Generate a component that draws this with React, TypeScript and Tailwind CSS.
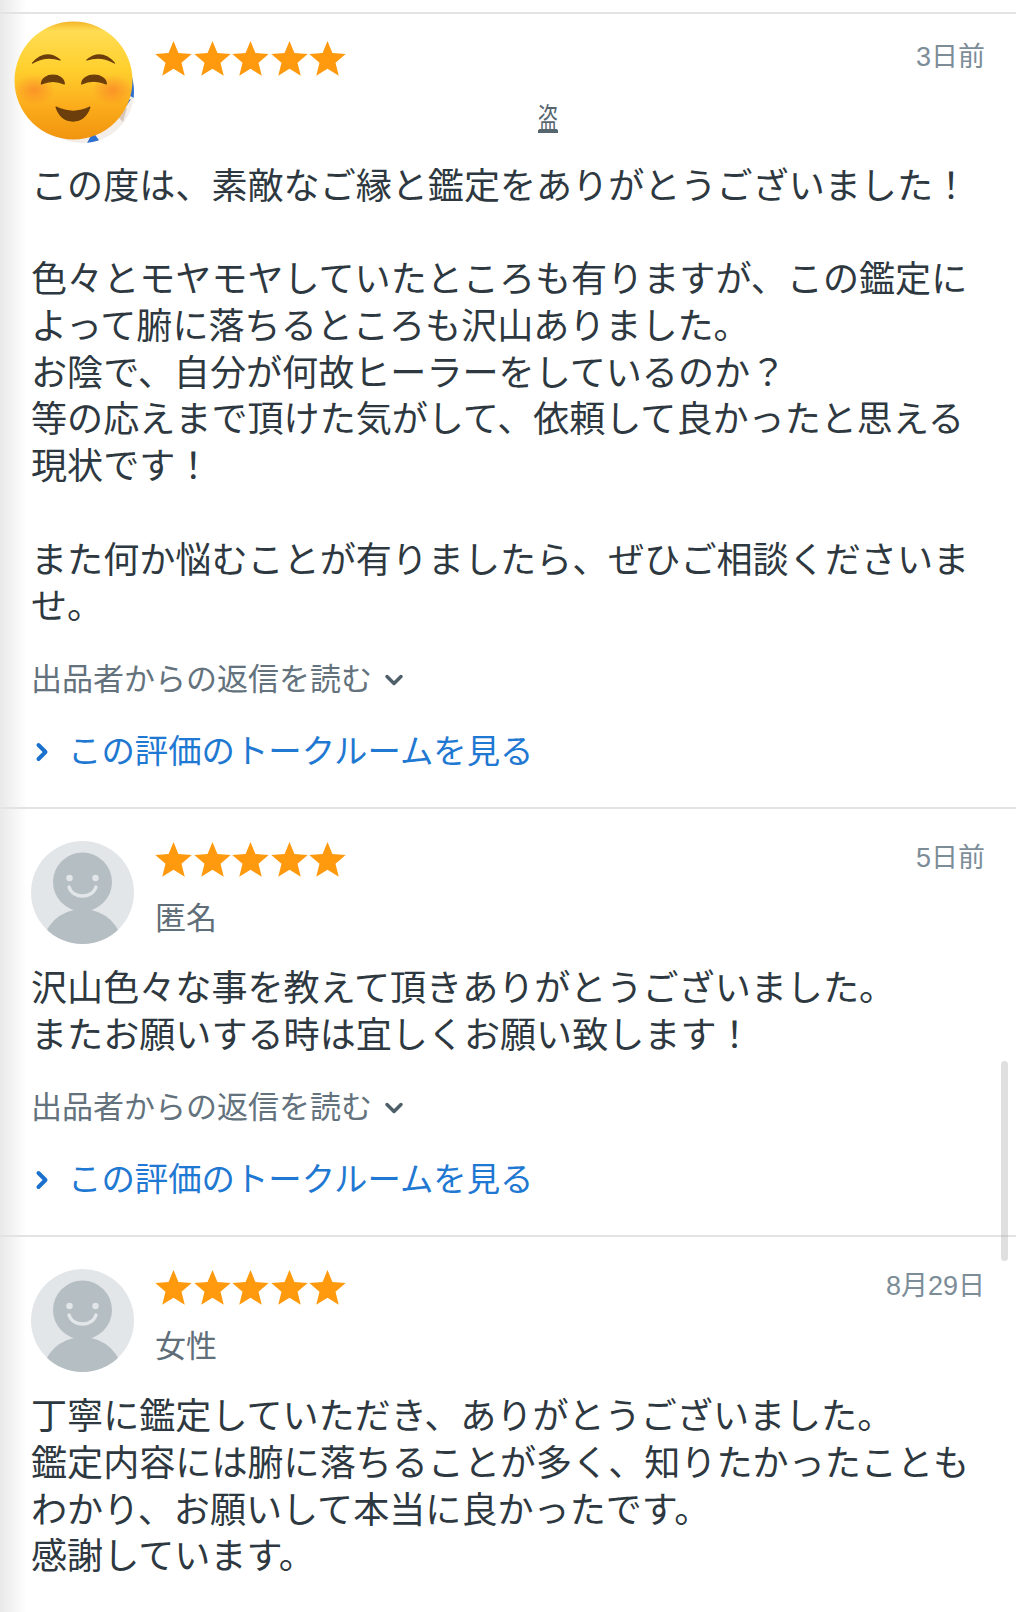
import React from 'react';
import { ChevronDown, ChevronRight } from 'lucide-react';

interface Review {
  date: string;
  name: string;
  lines: string[];
}

const reviews: Review[] = [
  {
    date: '3日前',
    name: '盗',
    lines: [
      'この度は、素敵なご縁と鑑定をありがとうございました！',
      '',
      '色々とモヤモヤしていたところも有りますが、この鑑定に',
      'よって腑に落ちるところも沢山ありました。',
      'お陰で、自分が何故ヒーラーをしているのか？',
      '等の応えまで頂けた気がして、依頼して良かったと思える',
      '現状です！',
      '',
      'また何か悩むことが有りましたら、ぜひご相談くださいま',
      'せ。',
    ],
  },
  {
    date: '5日前',
    name: '匿名',
    lines: ['沢山色々な事を教えて頂きありがとうございました。', 'またお願いする時は宜しくお願い致します！'],
  },
  {
    date: '8月29日',
    name: '女性',
    lines: [
      '丁寧に鑑定していただき、ありがとうございました。',
      '鑑定内容には腑に落ちることが多く、知りたかったことも',
      'わかり、お願いして本当に良かったです。',
      '感謝しています。',
    ],
  },
];

const Stars = () => (
  <div className="flex gap-[1.5px]">
    {[0, 1, 2, 3, 4].map(i => (
      <svg key={i} viewBox="0 0 24 24" className="w-[37px] h-[37px]">
        <polygon points="12,0.6 15.2,8.4 23.8,9.1 17.2,14.7 19.3,23.2 12,18.6 4.7,23.2 6.8,14.7 0.2,9.1 8.8,8.4" fill="#ff9a0e" />
      </svg>
    ))}
  </div>
);

const DefaultAvatar = () => (
  <svg viewBox="0 0 103 103" className="w-[103px] h-[103px] shrink-0">
    <defs>
      <clipPath id="avatarClip">
        <circle cx="51.5" cy="51.5" r="51.5" />
      </clipPath>
    </defs>
    <g clipPath="url(#avatarClip)">
      <rect width="103" height="103" fill="#e3e6e8" />
      <circle cx="51.5" cy="41" r="29.5" fill="#b5bec3" />
      <ellipse cx="51.5" cy="106" rx="40" ry="38" fill="#b5bec3" />
      <circle cx="38.5" cy="37" r="3.2" fill="#e3e6e8" />
      <circle cx="64.5" cy="37" r="3.2" fill="#e3e6e8" />
      <path d="M38 46c4 12 23 12 27 0" fill="none" stroke="#e3e6e8" strokeWidth="3.4" strokeLinecap="round" />
    </g>
  </svg>
);

const PhotoAvatar = () => (
  <div className="relative w-[103px] h-[103px] shrink-0">
    <svg viewBox="0 0 103 103" className="w-[103px] h-[103px]">
      <defs>
        <clipPath id="photoClip">
          <circle cx="51.5" cy="51.5" r="51.5" />
        </clipPath>
      </defs>
      <g clipPath="url(#photoClip)">
        <rect width="103" height="103" fill="#f3eeea" />
        <path d="M94 32l9 4v22l-8-4zM62 92l8 11H56zM92 62l8-3-6 9z" fill="#2f6fd0" />
        <path d="M84 74l12-6-4 14z" fill="#d8c7b8" />
      </g>
    </svg>
    <svg viewBox="0 0 116 116" className="absolute left-[-17px] top-[-19px] w-[119px] h-[119px]">
      <defs>
        <linearGradient id="faceFill" x1="0" y1="0" x2="0" y2="1">
          <stop offset="0" stopColor="#f4b52a" />
          <stop offset="0.08" stopColor="#ffdc52" />
          <stop offset="0.4" stopColor="#ffd02e" />
          <stop offset="0.75" stopColor="#fba91a" />
          <stop offset="1" stopColor="#f0940f" />
        </linearGradient>
        <radialGradient id="blush">
          <stop offset="0" stopColor="#f96a2c" stopOpacity="0.5" />
          <stop offset="1" stopColor="#f96a2c" stopOpacity="0" />
        </radialGradient>
      </defs>
      <circle cx="58" cy="58" r="57.5" fill="url(#faceFill)" />
      <ellipse cx="20" cy="67" rx="20" ry="15" fill="url(#blush)" />
      <ellipse cx="96" cy="67" rx="20" ry="15" fill="url(#blush)" />
      <g fill="#6b3e0b" stroke="#6b3e0b" strokeWidth="1.2" strokeLinejoin="round">
        <path d="M18 41Q31 27 45 38Q31 33 18 41zM71 38Q85 27 98 41Q85 33 71 38z" />
        <path d="M26.7 61.4C27 50 49 50 49 61.4C42 58 34 58 26.7 61.4zM66 61.4C66 50 90 50 90 61.4C82 58 73 58 66 61.4z" />
        <path d="M41 84Q58 92 74 84C71 93 65 97.5 57.5 97.5S44 93 41 84z" />
      </g>
    </svg>
  </div>
);

const ReviewCard: React.FC<{ review: Review; index: number }> = ({ review, index }) => (
  <section className={`border-t-2 border-[#e2e3e4] pl-[31px] pr-[31px] pb-[33px] ${index === 0 ? 'pt-[26px]' : 'pt-[32px]'}`}>
    <div className="flex">
      {index === 0 ? <PhotoAvatar /> : <DefaultAvatar />}
      <div className="flex-1 ml-[21px]">
        <div className="flex justify-between items-start">
          <Stars />
          <span className="text-[27px] leading-[34px] text-[#7c8d98]">{review.date}</span>
        </div>
        {index === 0 ? (
          <div className="mt-[24px] pl-[383px] h-[34px] text-[20px] leading-[34px] text-[#56666f]">
            <span className="inline-block underline scale-y-150">{review.name}</span>
          </div>
        ) : (
          <div className="mt-[21px] text-[31px] leading-[40px] text-[#5f6e78]">{review.name}</div>
        )}
      </div>
    </div>
    <div className={`text-[36.1px] leading-[46.7px] text-[#2e3840] ${index === 0 ? 'mt-[21px]' : 'mt-[22px]'}`}>
      {review.lines.map((line, i) => (
        <div key={i} className="h-[46.7px] whitespace-nowrap">{line}</div>
      ))}
    </div>
    {index < 2 && (
      <>
        <div className="mt-[27px] flex items-center text-[31px] leading-[44px] text-[#63727c]">
          出品者からの返信を読む
          <ChevronDown className="ml-[8px] text-[#4f5f69]" size={28} strokeWidth={3} />
        </div>
        <div className="mt-[28px] flex items-center text-[33.4px] leading-[44px] text-[#1f78d1]">
          <ChevronRight className="ml-[-3px] mr-[12px] text-[#1a70cc]" size={28} strokeWidth={3.4} />
          この評価のトークルームを見る
        </div>
      </>
    )}
  </section>
);

export default function App() {
  return (
    <div
      className="relative w-[1016px] h-[1612px] overflow-hidden pt-[12px] bg-linear-to-r from-[#e9e9e9] to-white to-[2.6%]"
      style={{ fontFamily: '"Liberation Sans", "Noto Sans CJK JP", sans-serif' }}
    >
      {reviews.map((review, i) => (
        <ReviewCard key={review.date} review={review} index={i} />
      ))}
      <div className="absolute left-[1001px] top-[1061px] w-[7px] h-[200px] rounded-full bg-[#b0b0b0]/40" />
    </div>
  );
}
